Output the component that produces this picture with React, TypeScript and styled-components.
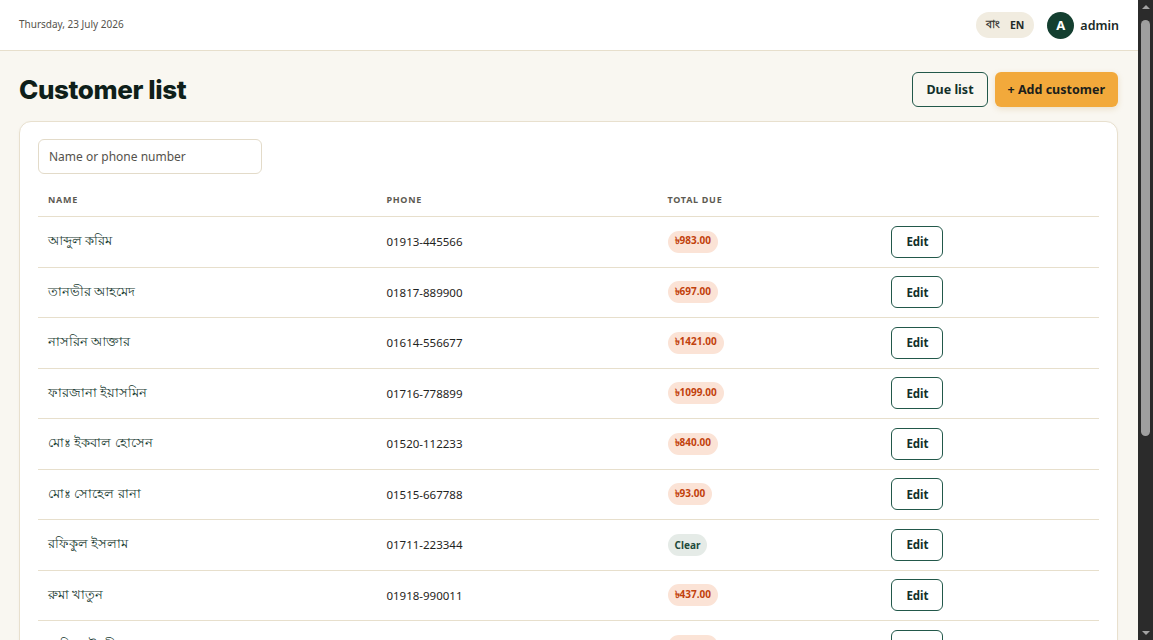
import React, { useState } from 'react';
import styled, { createGlobalStyle } from 'styled-components';

interface Customer {
    name: string;
    phone: string;
    due: number;
}

const customers: Customer[] = [
    { name: 'আব্দুল করিম', phone: '01913-445566', due: 983 },
    { name: 'তানভীর আহমেদ', phone: '01817-889900', due: 697 },
    { name: 'নাসরিন আক্তার', phone: '01614-556677', due: 1421 },
    { name: 'ফারজানা ইয়াসমিন', phone: '01716-778899', due: 1099 },
    { name: 'মোঃ ইকবাল হোসেন', phone: '01520-112233', due: 840 },
    { name: 'মোঃ সোহেল রানা', phone: '01515-667788', due: 93 },
    { name: 'রফিকুল ইসলাম', phone: '01711-223344', due: 0 },
    { name: 'রুমা খাতুন', phone: '01918-990011', due: 437 },
    { name: 'শাহিন চৌধুরী', phone: '01812-334455', due: 512 },
    { name: 'মাহমুদা আক্তার', phone: '01615-448899', due: 0 },
    { name: 'জাহিদ হাসান', phone: '01719-556600', due: 265 },
    { name: 'সুমাইয়া রহমান', phone: '01511-778822', due: 1180 },
    { name: 'কামরুল হাসান', phone: '01913-221100', due: 74 },
];

export default function App() {
    const [query, setQuery] = useState('');
    const [lang, setLang] = useState<'bn' | 'en'>('en');

    const rows = customers.filter(c =>
        c.name.includes(query) || c.phone.includes(query)
    );

    return (<>
        <GlobalStyle />
        <Header>
            <DateText>Thursday, 23 July 2026</DateText>
            <HeaderRight>
                <LangToggle>
                    <LangOption active={lang === 'bn'} onClick={() => setLang('bn')}>বাং</LangOption>
                    <LangOption active={lang === 'en'} onClick={() => setLang('en')}>EN</LangOption>
                </LangToggle>
                <User>
                    <Avatar>A</Avatar>
                    <UserName>admin</UserName>
                </User>
            </HeaderRight>
        </Header>
        <Main>
            <TitleRow>
                <Title>Customer list</Title>
                <Actions>
                    <OutlineButton>Due list</OutlineButton>
                    <PrimaryButton>+ Add customer</PrimaryButton>
                </Actions>
            </TitleRow>
            <Card>
                <Search
                    placeholder="Name or phone number"
                    value={query}
                    onChange={e => setQuery(e.target.value)}
                />
                <Table>
                    <colgroup>
                        <col style={{ width: '31.9%' }} />
                        <col style={{ width: '26.5%' }} />
                        <col style={{ width: '21.1%' }} />
                        <col />
                    </colgroup>
                    <thead>
                        <tr>
                            <Th>Name</Th>
                            <Th>Phone</Th>
                            <Th>Total due</Th>
                            <Th />
                        </tr>
                    </thead>
                    <tbody>
                        {rows.map(c => (
                            <tr key={c.phone}>
                                <NameCell>{c.name}</NameCell>
                                <Td>{c.phone}</Td>
                                <Td>
                                    {c.due > 0
                                        ? <Badge kind="due">৳{c.due.toFixed(2)}</Badge>
                                        : <Badge kind="clear">Clear</Badge>}
                                </Td>
                                <Td><EditButton>Edit</EditButton></Td>
                            </tr>
                        ))}
                    </tbody>
                </Table>
            </Card>
        </Main>
        {/* the window's scrollbar, as it shows in the frame */}
        <ScrollTrack>
            <ScrollArrow dir="up" />
            <ScrollThumb />
            <ScrollArrow dir="down" />
        </ScrollTrack>
    </>);
}

const GlobalStyle = createGlobalStyle`
    * { box-sizing: border-box; }
    html {
        background: #2b2b2b;
    }
    body {
        margin: 0 15px 0 0;
        background: #f9f7f1;
        color: #1b2a26;
        font-family: "Noto Sans", Lato, sans-serif;
    }
`;

const ScrollTrack = styled.div`
    position: fixed;
    top: 0;
    right: 0;
    width: 15px;
    height: 100vh;
    background: #2b2b2b;
    display: flex;
    flex-direction: column;
    align-items: center;
`;

const ScrollArrow = styled.div<{ dir: 'up' | 'down' }>`
    width: 0;
    height: 0;
    margin: 5px 0;
    border-left: 4px solid transparent;
    border-right: 4px solid transparent;
    ${props => props.dir === 'up'
        ? 'border-bottom: 4px solid #a3a3a3;'
        : 'border-top: 4px solid #a3a3a3; margin-top: auto;'}
`;

const ScrollThumb = styled.div`
    width: 9px;
    height: 416px;
    margin-top: 6px;
    border-radius: 5px;
    background: #9f9f9f;
`;

const Header = styled.header`
    height: 51px;
    background: #ffffff;
    border-bottom: 1px solid #e7dfcc;
    display: flex;
    align-items: center;
    justify-content: space-between;
    padding: 0 19px;
`;

const DateText = styled.span`
    font-size: 10px;
    color: #55524c;
    margin-top: -2px;
`;

const HeaderRight = styled.div`
    display: flex;
    align-items: center;
    gap: 13px;
`;

const LangToggle = styled.div`
    display: flex;
    align-items: center;
    height: 26px;
    padding: 0 5px;
    border-radius: 13px;
    background: #f1ece0;
`;

const LangOption = styled.button<{ active: boolean }>`
    background: transparent;
    border: none;
    padding: 0 5px;
    font-family: inherit;
    font-size: 10.5px;
    font-weight: 700;
    color: ${props => props.active ? '#1f2b28' : '#3a3a36'};
    cursor: pointer;
`;

const User = styled.div`
    display: flex;
    align-items: center;
    gap: 6px;
`;

const Avatar = styled.div`
    width: 27px;
    height: 27px;
    border-radius: 50%;
    background: #143f30;
    color: #ffffff;
    display: flex;
    align-items: center;
    justify-content: center;
    font-size: 13px;
    font-weight: 700;
`;

const UserName = styled.span`
    font-size: 12.5px;
    font-weight: 600;
    color: #1b2a26;
`;

const Main = styled.main`
    padding: 21px 20px 26px 19px;
`;

const TitleRow = styled.div`
    display: flex;
    align-items: center;
    justify-content: space-between;
    margin-bottom: 14px;
`;

const Title = styled.h1`
    margin: 0;
    font-family: Inter, "Noto Sans", sans-serif;
    font-size: 26px;
    font-weight: 800;
    letter-spacing: -0.4px;
    color: #0f1f1a;
`;

const Actions = styled.div`
    display: flex;
    gap: 7px;
`;

const OutlineButton = styled.button`
    height: 35px;
    padding: 0 13px;
    border: 1px solid #22584a;
    border-radius: 6px;
    background: transparent;
    font-family: inherit;
    font-size: 12.5px;
    font-weight: 700;
    color: #12302a;
    cursor: pointer;
`;

const PrimaryButton = styled.button`
    height: 35px;
    padding: 0 13px;
    border: none;
    border-radius: 6px;
    background: #f2a93b;
    box-shadow: 0 2px 6px rgba(180, 120, 30, 0.18);
    font-family: inherit;
    font-size: 12.5px;
    font-weight: 700;
    color: #1b1f1c;
    cursor: pointer;
`;

const Card = styled.section`
    background: #ffffff;
    border: 1px solid #e8e0ce;
    border-radius: 12px;
    padding: 17px 18px 18px;
    box-shadow: 0 1px 3px rgba(120, 100, 60, 0.05);
`;

const Search = styled.input`
    display: block;
    width: 224px;
    height: 35px;
    padding: 0 10px;
    margin-bottom: 8px;
    border: 1px solid #e3dbc9;
    border-radius: 6px;
    font-family: inherit;
    font-size: 12px;
    color: #1b2a26;
    outline: none;
    &::placeholder {
        color: #55524c;
    }
`;

const Table = styled.table`
    width: 100%;
    border-collapse: collapse;
    table-layout: fixed;
`;

const Th = styled.th`
    text-align: left;
    padding: 11px 10px 10px;
    font-size: 9px;
    font-weight: 700;
    letter-spacing: 0.7px;
    text-transform: uppercase;
    color: #5d5a52;
    border-bottom: 1px solid #e7dfcc;
`;

const Td = styled.td`
    padding: 8.75px 10px;
    font-size: 11.5px;
    color: #1f2422;
    border-bottom: 1px solid #e7dfcc;
    vertical-align: middle;
`;

const NameCell = styled(Td)`
    font-size: 13px;
    color: #17392f;
`;

const Badge = styled.span<{ kind: 'due' | 'clear' }>`
    display: inline-flex;
    align-items: center;
    height: 22px;
    padding: 0 7px;
    border-radius: 11px;
    font-size: 10px;
    font-weight: 700;
    background: ${props => props.kind === 'due' ? '#fbe3d6' : '#e5ebe7'};
    color: ${props => props.kind === 'due' ? '#c2410c' : '#1d4a3b'};
`;

const EditButton = styled.button`
    width: 52px;
    height: 32px;
    border: 1px solid #22584a;
    border-radius: 6px;
    background: #ffffff;
    font-family: inherit;
    font-size: 11.5px;
    font-weight: 700;
    color: #12302a;
    cursor: pointer;
`;
